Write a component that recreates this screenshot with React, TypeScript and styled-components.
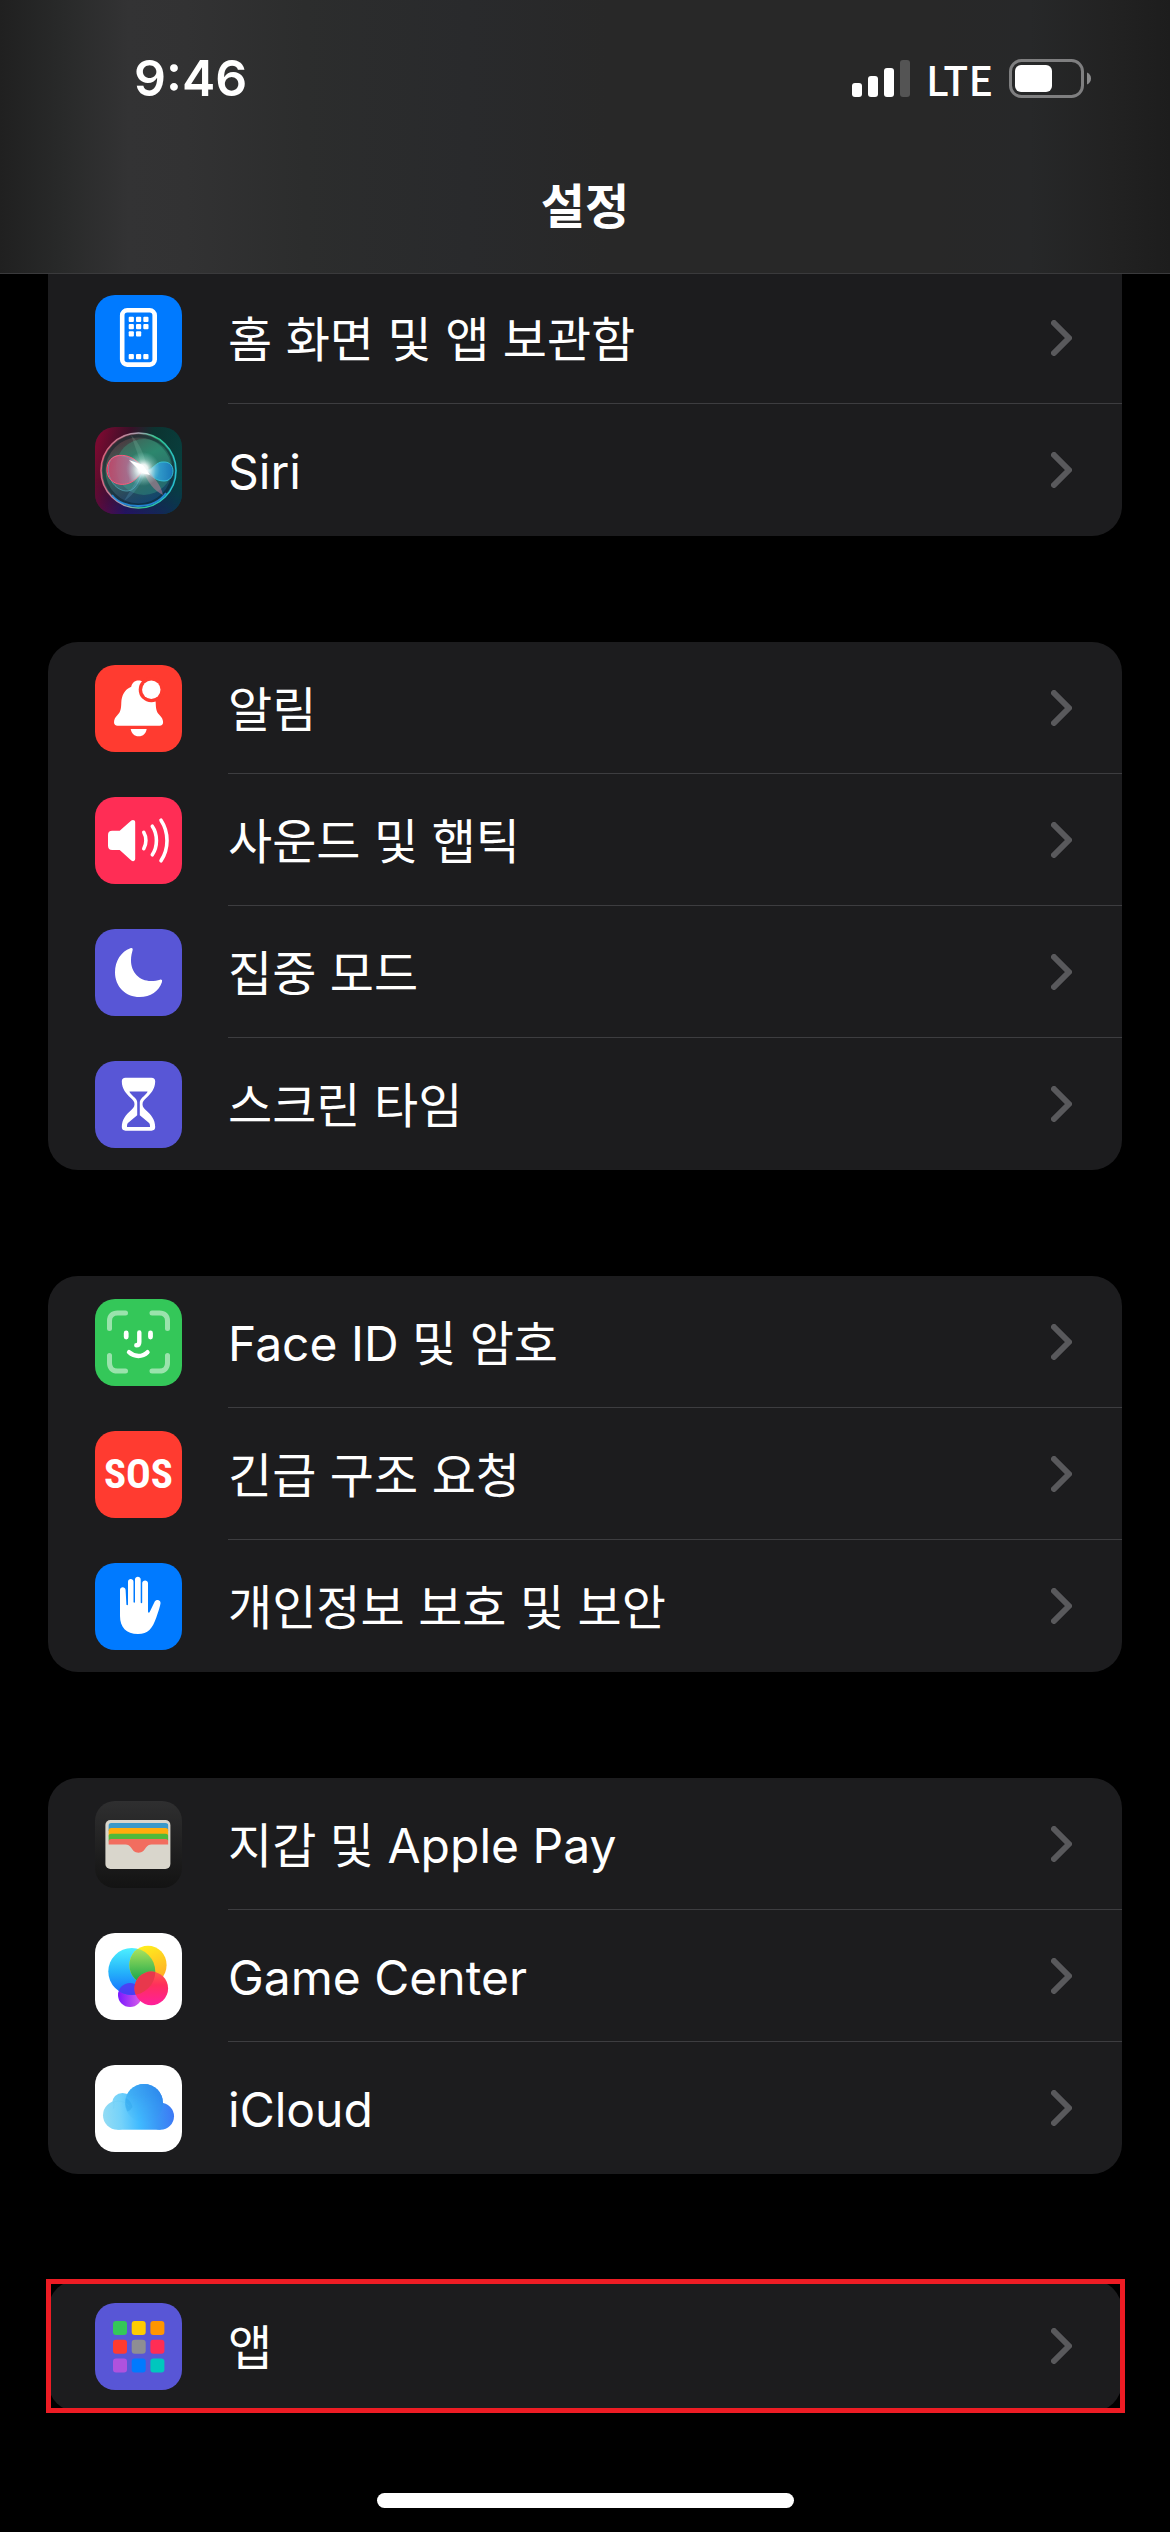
import React from "react";
import styled, { createGlobalStyle, css } from "styled-components";

const GlobalStyle = createGlobalStyle`
  * { box-sizing: border-box; }
  html, body { margin: 0; background: #000; }
  body {
    font-family: Inter, "Noto Sans CJK KR", sans-serif;
    color: #fff;
  }
`;

const Screen = styled.div`
  display: flex;
  flex-direction: column;
  min-height: 100vh;
  background: #000;
`;

const Header = styled.header`
  position: sticky;
  top: 0;
  z-index: 1;
  margin-bottom: -2px;
  padding-bottom: 15px;
  border-bottom: 1px solid #3a3a3c;
  background: linear-gradient(
    90deg,
    #202020 0%,
    #282929 5%,
    #333334 11%,
    #323233 16%,
    #2c2d2d 26%,
    #292a2c 40%,
    #282828 52%,
    #282828 80%,
    #272829 88%,
    #222 95%,
    #1d1d1d 100%
  );
`;

const StatusBar = styled.div`
  display: flex;
  align-items: center;
  justify-content: space-between;
  height: 156px;
  padding: 0 79px 0 134px;
`;

const Time = styled.time`
  font-size: 50px;
  font-weight: 600;
  line-height: 60px;
`;

const StatusGroup = styled.div`
  display: flex;
  align-items: center;
  gap: 16px;
`;

const Network = styled.span`
  font-family: "Noto Sans CJK KR", Inter, sans-serif;
  font-size: 41px;
  font-weight: 500;
  line-height: 60px;
`;

const Title = styled.h1`
  margin: 0;
  font-size: 48px;
  font-weight: 600;
  line-height: 102px;
  text-align: center;
`;

const Groups = styled.main`
  display: flex;
  flex-direction: column;
  gap: 106px;
  padding: 0 48px;
`;

const Group = styled.ul<{ $open?: boolean; $marked?: boolean }>`
  position: relative;
  margin: 0;
  padding: 0;
  list-style: none;
  background: #1c1c1e;
  border-radius: ${(p) => (p.$open ? "0 0 30px 30px" : "30px")};
  ${(p) =>
    p.$marked &&
    css`
      &::after {
        content: "";
        position: absolute;
        inset: -1px -3px -1px -2px;
        border: 5px solid #ed1c24;
        pointer-events: none;
      }
    `}
`;

const RowLink = styled.a`
  display: flex;
  align-items: center;
  gap: 46px;
  height: 132px;
  padding-left: 47px;
  color: inherit;
  text-decoration: none;
`;

const RowBody = styled.span`
  display: flex;
  flex: 1;
  align-items: center;
  justify-content: space-between;
  height: 100%;
  padding-right: 50px;
  border-bottom: 1px solid #3d3d40;

  li:last-child & {
    border-bottom-color: transparent;
  }
`;

const Label = styled.span`
  padding-top: 4px;
  font-size: 48px;
  line-height: 60px;
`;

const Tile = styled.span<{ $bg: string }>`
  display: flex;
  flex: none;
  align-items: center;
  justify-content: center;
  width: 87px;
  height: 87px;
  border-radius: 20px;
  overflow: hidden;
  background: ${(p) => p.$bg};

  svg {
    display: block;
    width: 87px;
    height: 87px;
  }
`;

const SosText = styled.span`
  font-family: "Roboto Condensed", "Open Sans Condensed", "Liberation Sans Narrow", "Noto Sans", sans-serif;
  font-size: 41px;
  font-weight: 700;
  line-height: 60px;
`;

const Footer = styled.footer`
  display: flex;
  justify-content: center;
  margin-top: auto;
  padding: 48px 0 24px;
`;

const HomeIndicator = styled.div`
  width: 417px;
  height: 15px;
  border-radius: 8px;
  background: #fff;
`;

const Art = ({ children }: { children: React.ReactNode }) => (
  <svg viewBox="0 0 87 87" aria-hidden="true">
    {children}
  </svg>
);

const Chevron = () => (
  <svg width="21" height="36" viewBox="0 0 21 36" fill="none" aria-hidden="true">
    <path d="M3 3 18 18 3 33" stroke="#59595c" strokeWidth="6" strokeLinecap="round" strokeLinejoin="round" />
  </svg>
);

const Signal = () => (
  <svg width="58" height="37" viewBox="0 0 58 37" fill="#fff" role="img" aria-label="신호 강도">
    <rect x="0" y="23" width="10" height="14" rx="3" />
    <rect x="16" y="16" width="10" height="21" rx="3" />
    <rect x="32" y="8" width="10" height="29" rx="3" />
    <rect x="48" y="0" width="10" height="37" rx="3" fill="#545454" />
  </svg>
);

const Battery = () => (
  <svg width="82" height="39" viewBox="0 0 82 39" role="img" aria-label="배터리">
    <rect x="1.5" y="1.5" width="72" height="36" rx="11" fill="none" stroke="#7f7f80" strokeWidth="3" />
    <rect x="6" y="6" width="37" height="27" rx="6" fill="#fff" />
    <path d="M78 13.5c2.600 1 4 3.400 4 6s-1.400 5-4 6z" fill="#8a8a8b" />
  </svg>
);

const HomeArt = () => (
  <Art>
    <rect x="27.200" y="15.300" width="32.500" height="54.300" rx="5" fill="none" stroke="#fff" strokeWidth="4.600" />
    {[
      [33.7, 21.7], [41, 21.7], [48.3, 21.7],
      [33.7, 29], [41, 29], [48.3, 29],
      [33.7, 36.3], [41, 36.3],
      [33.7, 59], [41, 59], [48.3, 59],
    ].map(([x, y]) => (
      <rect key={`${x}-${y}`} x={x} y={y} width="5.200" height="5.200" rx="1" fill="#fff" />
    ))}
  </Art>
);

const SiriArt = () => (
  <Art>
    <defs>
      <linearGradient id="siriBg" x1="0" x2="1" y1=".3" y2=".6">
        <stop offset="0" stopColor="#780a30" />
        <stop offset=".3" stopColor="#3a1028" />
        <stop offset=".55" stopColor="#0c3330" />
        <stop offset="1" stopColor="#07403f" />
      </linearGradient>
      <linearGradient id="siriLow" x1="0" x2="1">
        <stop offset="0" stopColor="#650a3c" />
        <stop offset=".35" stopColor="#241263" />
        <stop offset="1" stopColor="#0a3450" />
      </linearGradient>
      <linearGradient id="siriFade" x1="0" x2="0" y1="0" y2="1">
        <stop offset=".6" stopColor="#000" />
        <stop offset="1" stopColor="#fff" />
      </linearGradient>
      <mask id="siriMask"><rect width="87" height="87" fill="url(#siriFade)" /></mask>
      <linearGradient id="siriRing" x1="0" x2="1" y1=".4" y2=".6">
        <stop offset="0" stopColor="#d8607a" />
        <stop offset=".4" stopColor="#a8a0b0" />
        <stop offset=".65" stopColor="#30c890" />
        <stop offset="1" stopColor="#28c0d0" />
      </linearGradient>
      <linearGradient id="siriOrb" x1=".2" x2=".7" y1="0" y2="1">
        <stop offset="0" stopColor="#5c3038" />
        <stop offset=".4" stopColor="#2f8a70" />
        <stop offset=".7" stopColor="#2b5866" />
        <stop offset="1" stopColor="#0a4a80" />
      </linearGradient>
      <radialGradient id="siriGlow">
        <stop offset="0" stopColor="#fff" />
        <stop offset=".28" stopColor="#fff" stopOpacity=".9" />
        <stop offset=".6" stopColor="#c8eee8" stopOpacity=".4" />
        <stop offset="1" stopColor="#a0e0e0" stopOpacity="0" />
      </radialGradient>
      <linearGradient id="siriPink" x1="0" x2="1">
        <stop offset="0" stopColor="#f01848" />
        <stop offset=".6" stopColor="#d05080" />
        <stop offset="1" stopColor="#fff" />
      </linearGradient>
      <linearGradient id="siriBlue" x1="0" x2="1">
        <stop offset="0" stopColor="#fff" />
        <stop offset=".4" stopColor="#38a8d8" />
        <stop offset="1" stopColor="#1878c0" />
      </linearGradient>
    </defs>
    <rect width="87" height="87" fill="url(#siriBg)" />
    <rect width="87" height="87" fill="url(#siriLow)" mask="url(#siriMask)" />
    <circle cx="43.500" cy="43.500" r="37" fill="url(#siriOrb)" opacity=".75" />
    <circle cx="43.500" cy="43.500" r="34.500" fill="none" stroke="#0a2028" strokeOpacity=".5" strokeWidth="3" />
    <circle cx="49" cy="40" r="28" fill="#38a888" opacity=".35" />
    <circle cx="43.500" cy="43.500" r="37.500" fill="none" stroke="url(#siriRing)" strokeWidth="1.600" />
    <path d="M17 68c11 15 42 15 54-2" fill="none" stroke="#2898f0" strokeWidth="1.800" opacity=".8" />
    <path d="M48 42C39 25 14 23 12 41s25 25 36 1z" fill="url(#siriPink)" opacity=".85" />
    <path d="M48 42C36 28 20 24 15 34c-6 14 5 31 18 30 9-1 12-13 15-22z" fill="#68b8c0" fillOpacity=".25" stroke="#58b8c8" strokeOpacity=".6" />
    <path d="M48 42C39 25 14 23 12 41s25 25 36 1z" fill="none" stroke="#ff5878" />
    <path d="M49 43c9 2 11-9 20-8 6 0 9 4 9 9s-3 10-9 10c-9 0-13-6-20-11z" fill="url(#siriBlue)" opacity=".9" stroke="#38c8e0" />
    <path d="M48 42 36 8c8 7 14 20 16 34z" fill="#b8f0d8" opacity=".15" />
    <path d="M48 42 29 74c10-6 18-18 22-30z" fill="#60a8d0" opacity=".25" />
    <path d="M48 42c4 14 12 22 20 26-2-10-10-20-17-25z" fill="#d08098" opacity=".5" />
    <circle cx="48" cy="42" r="17" fill="url(#siriGlow)" />
    <path d="m34 33 14 5 2 3 5 7-8-2z" fill="#fff" />
  </Art>
);

const BellArt = () => (
  <Art>
    <path
      fill="#fff"
      d="M43.500 15.500c-4 0-6.500 2.500-7.300 6.300C29.800 24.500 26.600 30.500 26.300 37.500c-.200 7-.900 9.500-4 12.800C20.500 52.300 19 54.200 19 57.300c0 2.200 1.400 3.500 3.600 3.500h42c2.200 0 3.500-1.300 3.500-3.500 0-3.100-1.600-5-3.400-7-3.100-3.300-3.800-5.800-4-12.800C60 30.500 57 24.500 50.800 21.800 50 18 47.500 15.500 43.500 15.500z"
    />
    <path fill="#fff" d="M35.700 64h16c-.700 4.500-3.600 7.300-8 7.300s-7.300-2.800-8-7.300z" />
    <circle cx="56.300" cy="24.700" r="12.600" fill="#ff3b30" />
    <circle cx="56.300" cy="24.700" r="9.200" fill="#fff" />
  </Art>
);

const SoundArt = () => (
  <Art>
    <path fill="#fff" d="M13 38c0-2.800 1.500-4.200 4.200-4.200h7.500L36.300 23.500c1.500-1.200 3.900-.500 3.900 1.700v36.600c0 2.200-2.200 3.100-3.900 1.700L24.700 53h-7.500C14.500 53 13 51.600 13 48.800z" />
    <g fill="none" stroke="#fff" strokeWidth="3.600" strokeLinecap="round">
      <path d="M48.800 35.300c2.800 4.700 2.800 11.700 0 16.400" />
      <path d="M57.300 29.200c5.500 8 5.500 20.600 0 28.600" />
      <path d="M66 23.200c8 12 8 28.600 0 40.600" />
    </g>
  </Art>
);

const MoonArt = () => (
  <Art>
    <path
      fill="#fff"
      d="M35.400 19.200c1.700-.600 2.700.400 2.200 2C37 23.500 36 27 36 31.500 36 43.500 44.500 52 56 52c3.700 0 6.500-.500 9-1.300 1.500-.400 2.500.500 2 2.200C64 62 55.500 68 44.700 68 30.500 68 20 57.500 20 43.200 20 32 26 22.600 35.400 19.200z"
    />
  </Art>
);

const HourglassArt = () => (
  <Art>
    <path
      fill="#fff"
      d="M30.500 16.700h26c2.400 0 3.700 1.300 3.700 3.600 0 7.700-4.500 12.700-8.700 16.400-2.200 2-4 3.700-4 6.500s1.800 4.500 4 6.500c4.200 3.700 8.700 8.700 8.700 16.400 0 2.300-1.300 3.600-3.700 3.600h-26c-2.400 0-3.700-1.300-3.700-3.600 0-7.700 4.500-12.700 8.700-16.400 2.200-2 4-3.700 4-6.500s-1.800-4.500-4-6.500c-4.200-3.700-8.700-8.700-8.700-16.400 0-2.300 1.300-3.600 3.700-3.600z"
    />
    <path fill="#5856d6" d="M34.500 30.600h18c0 1.500-4 4.900-6 6.900-1.200 1.300-1.700 2.500-1.700 4v12.700l8.700 7.300c1.300 1.100 1.500 2.300 1.500 4.500H32c0-2.200.200-3.400 1.500-4.500l8.700-7.300V41.500c0-1.500-.500-2.700-1.700-4-2-2-6-5.400-6-6.900z" />
  </Art>
);

const FaceArt = () => (
  <Art>
    <g fill="none" stroke="#fff" strokeLinecap="round">
      <path
        strokeOpacity=".5"
        strokeWidth="5"
        d="M14.500 29.500v-7.500c0-5 3-8 8-8H30.500M57 14h7.500c5 0 8 3 8 8v7.500M72.500 56.500v7.500c0 5-3 8-8 8H57M30.500 72h-8c-5 0-8-3-8-8v-7.500"
      />
      <path strokeWidth="4.800" d="M31.200 34v4M55.500 34v4" />
      <path strokeWidth="4.400" d="M44.300 33.500V43c0 2-1 3.300-3 3.300M34 53.200c5.500 5 13.500 5 18.500 0" />
    </g>
  </Art>
);

const HandArt = () => (
  <Art>
    <path
      fill="#fff"
      d="M25 27c0-3.600 5.400-3.600 5.600 0l.800 14.500c0 1 1.600 1 1.600 0V18.700c0-3.600 5.500-3.600 5.500 0V39c0 1 1.500 1 1.500 0V16.500c0-3.600 5.700-3.600 5.700 0V39.500c0 1 1.500 1 1.500 0V20.300c0-3.600 5.800-3.600 5.800 0V48.500c0 1.500 1.200 1.500 1.800.2l4.700-9.700c1.600-3.200 6.600-2.200 6 1.500-.4 3-2.200 8-4.200 14C57.500 65.500 53 71 43 71 31 71 25 64 25 53z"
    />
  </Art>
);

const WalletArt = () => (
  <Art>
    <defs>
      <clipPath id="walletCards"><rect x="13.400" y="22" width="60" height="40" rx="3" /></clipPath>
    </defs>
    <rect x="10.400" y="19" width="65" height="49" rx="5" fill="#d9d6cc" />
    <g clipPath="url(#walletCards)">
      <rect x="13.400" y="22" width="60" height="8" fill="#3a99c9" />
      <rect x="13.400" y="27" width="60" height="10" rx="3" fill="#ffad0d" />
      <rect x="13.400" y="32.700" width="60" height="9" rx="3" fill="#4fb93b" />
      <path fill="#f26d5f" d="M13.400 43.500V41q0-3 3-3h54q3 0 3 3v2.500H56.500c-2.500 0-4 1-5.500 3-2 3-3.500 5.200-7.500 5.200s-5.500-2.200-7.500-5.200c-1.500-2-3-3-5.500-3z" />
    </g>
  </Art>
);

const GameArt = () => (
  <Art>
    <defs>
      <linearGradient id="gcBlue" x1="0" x2="0" y1="0" y2="1">
        <stop offset="0" stopColor="#4df0ff" />
        <stop offset=".5" stopColor="#25b4fa" />
        <stop offset="1" stopColor="#146cff" />
      </linearGradient>
      <linearGradient id="gcYellow" x1="0" x2=".4" y1="0" y2="1">
        <stop offset="0" stopColor="#fff81c" />
        <stop offset="1" stopColor="#ffae26" />
      </linearGradient>
      <linearGradient id="gcGreen" x1="0" x2="0" y1="0" y2="1">
        <stop offset="0" stopColor="#b8e860" />
        <stop offset="1" stopColor="#0aa048" />
      </linearGradient>
      <linearGradient id="gcRed" x1="0" x2="0" y1="0" y2="1">
        <stop offset="0" stopColor="#ff5c4a" />
        <stop offset=".4" stopColor="#ff2f5c" />
        <stop offset="1" stopColor="#ff1f9c" />
      </linearGradient>
      <linearGradient id="gcPurple" x1="0" x2="1">
        <stop offset="0" stopColor="#7a18ff" />
        <stop offset="1" stopColor="#dc60e8" />
      </linearGradient>
      <clipPath id="gcBlueClip"><circle cx="36.800" cy="38.500" r="23.500" /></clipPath>
    </defs>
    <circle cx="35" cy="62" r="12" fill="url(#gcPurple)" />
    <circle cx="36.800" cy="38.500" r="23.500" fill="url(#gcBlue)" />
    <ellipse cx="53" cy="32" rx="18.600" ry="19.300" fill="url(#gcYellow)" />
    <g clipPath="url(#gcBlueClip)">
      <ellipse cx="53" cy="32" rx="18.600" ry="19.300" fill="url(#gcGreen)" />
      <circle cx="35" cy="62" r="12" fill="#5a2cf0" opacity=".75" />
    </g>
    <circle cx="56.300" cy="55.400" r="16.800" fill="url(#gcRed)" />
    <g clipPath="url(#gcBlueClip)">
      <circle cx="56.300" cy="55.400" r="16.800" fill="#e8384c" />
    </g>
  </Art>
);

const CloudArt = () => (
  <Art>
    <defs>
      <linearGradient id="cloud" gradientUnits="userSpaceOnUse" x1="8" x2="79" y1="52" y2="46">
        <stop offset="0" stopColor="#94dcf4" />
        <stop offset=".25" stopColor="#74d2fa" />
        <stop offset=".5" stopColor="#40baff" />
        <stop offset=".75" stopColor="#3a98f6" />
        <stop offset="1" stopColor="#3d78f5" />
      </linearGradient>
      <linearGradient id="cloudTop" x1="0" x2="1" y1=".6" y2=".2">
        <stop offset="0" stopColor="#45baf8" />
        <stop offset="1" stopColor="#2c86ec" />
      </linearGradient>
      <linearGradient id="cloudFade" x1="0" x2="0" y1="0" y2="1">
        <stop offset=".3" stopColor="#fff" />
        <stop offset="1" stopColor="#000" />
      </linearGradient>
      <mask id="cloudMask"><rect x="29" y="18" width="40" height="40" fill="url(#cloudFade)" /></mask>
    </defs>
    <g fill="url(#cloud)">
      <circle cx="27.500" cy="38.500" r="10.500" />
      <circle cx="22.500" cy="50.200" r="14.500" />
      <circle cx="49" cy="38" r="19" />
      <circle cx="65.500" cy="51.200" r="13.500" />
      <rect x="22.500" y="44" width="43" height="20.700" />
    </g>
    <circle cx="49" cy="38" r="19" fill="url(#cloudTop)" mask="url(#cloudMask)" />
    <path d="M31 33a19 19 0 0 0 1.500 13.500A10.500 10.500 0 0 0 37.500 42 14 14 0 0 0 31 33z" fill="#2ea4ea" opacity=".45" />
    <path d="M18.500 43.500q1-4 0-6.500A14.500 14.500 0 0 1 34 41" fill="none" stroke="#5cc4ee" opacity=".25" />
  </Art>
);

const AppsArt = () => (
  <Art>
    {["#34c759", "#ffcc00", "#ff9500", "#ff3b30", "#8e8e93", "#ff2d55", "#af52de", "#007aff", "#00c7be"].map(
      (color, i) => (
        <rect key={color} x={18 + (i % 3) * 18.7} y={18 + Math.floor(i / 3) * 18.7} width="14" height="14" rx="3" fill={color} />
      ),
    )}
  </Art>
);

type Item = { label: string; bg: string; icon: React.ReactNode };
type Section = { id: string; open?: boolean; marked?: boolean; items: Item[] };

const sections: Section[] = [
  {
    id: "home",
    open: true,
    items: [
      { label: "홈 화면 및 앱 보관함", bg: "#007aff", icon: <HomeArt /> },
      { label: "Siri", bg: "#16262c", icon: <SiriArt /> },
    ],
  },
  {
    id: "alerts",
    items: [
      { label: "알림", bg: "#ff3b30", icon: <BellArt /> },
      { label: "사운드 및 햅틱", bg: "#ff2d55", icon: <SoundArt /> },
      { label: "집중 모드", bg: "#5856d6", icon: <MoonArt /> },
      { label: "스크린 타임", bg: "#5856d6", icon: <HourglassArt /> },
    ],
  },
  {
    id: "security",
    items: [
      { label: "Face ID 및 암호", bg: "#34c759", icon: <FaceArt /> },
      { label: "긴급 구조 요청", bg: "#ff3b30", icon: <SosText>SOS</SosText> },
      { label: "개인정보 보호 및 보안", bg: "#007aff", icon: <HandArt /> },
    ],
  },
  {
    id: "services",
    items: [
      { label: "지갑 및 Apple Pay", bg: "linear-gradient(#2f2f30, #131313)", icon: <WalletArt /> },
      { label: "Game Center", bg: "#fff", icon: <GameArt /> },
      { label: "iCloud", bg: "#fff", icon: <CloudArt /> },
    ],
  },
  {
    id: "apps",
    marked: true,
    items: [{ label: "앱", bg: "#5856d6", icon: <AppsArt /> }],
  },
];

export default function App() {
  return (
    <>
      <GlobalStyle />
      <Screen>
        <Header>
          <StatusBar>
            <Time>9:46</Time>
            <StatusGroup>
              <Signal />
              <Network>LTE</Network>
              <Battery />
            </StatusGroup>
          </StatusBar>
          <Title>설정</Title>
        </Header>
        <Groups>
          {sections.map((section) => (
            <Group key={section.id} $open={section.open} $marked={section.marked}>
              {section.items.map((item) => (
                <li key={item.label}>
                  <RowLink href={`#${section.id}`}>
                    <Tile $bg={item.bg}>{item.icon}</Tile>
                    <RowBody>
                      <Label>{item.label}</Label>
                      <Chevron />
                    </RowBody>
                  </RowLink>
                </li>
              ))}
            </Group>
          ))}
        </Groups>
        <Footer>
          <HomeIndicator />
        </Footer>
      </Screen>
    </>
  );
}
